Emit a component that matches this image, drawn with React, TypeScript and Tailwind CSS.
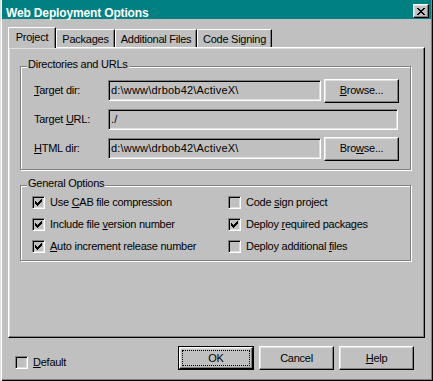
import type { ReactNode } from "react";

const raised =
  "border border-t-white border-l-white border-r-black border-b-black shadow-[inset_-1px_-1px_0_#808080,inset_1px_1px_0_#dfdfdf]";
const sunken =
  "border border-t-[#808080] border-l-[#808080] border-r-white border-b-white shadow-[inset_1px_1px_0_#000,inset_-1px_-1px_0_#dfdfdf]";

function Check({ on }: { on?: boolean }) {
  return (
    <span className={`w-[13px] h-[13px] shrink-0 flex items-center justify-center bg-[#c0c0c0] ${sunken}`}>
      {on && (
        <svg width="7" height="7" viewBox="0 0 7 7" shapeRendering="crispEdges">
          <path
            d="M0 2h1v3h-1z M1 3h1v3h-1z M2 4h1v3h-1z M3 3h1v3h-1z M4 2h1v3h-1z M5 1h1v3h-1z M6 0h1v3h-1z"
            fill="#000"
          />
        </svg>
      )}
    </span>
  );
}

function CheckRow({ on, children }: { on?: boolean; children: ReactNode }) {
  return (
    <div className="flex items-center gap-[5px] h-[13px]">
      <Check on={on} />
      <span className="whitespace-nowrap">{children}</span>
    </div>
  );
}

function Button({ children, def, className = "" }: { children: ReactNode; def?: boolean; className?: string }) {
  if (def) {
    return (
      <div className={`w-[76px] h-[24px] border border-black ${className}`}>
        <div className={`w-full h-full flex items-center justify-center ${raised}`}>
          <span className="w-[68px] h-[16px] border border-dotted border-black flex items-center justify-center">
            {children}
          </span>
        </div>
      </div>
    );
  }
  return (
    <div className={`w-[75px] h-[24px] flex items-center justify-center ${raised} ${className}`}>
      {children}
    </div>
  );
}

function Group({ label, className = "", children }: { label: string; className?: string; children: ReactNode }) {
  return (
    <div
      className={`relative w-[391px] border border-[#808080] shadow-[1px_1px_0_#fff,inset_1px_1px_0_#fff] ${className}`}
    >
      <span className="absolute -top-[9px] left-[6px] px-[1px] bg-[#c0c0c0] leading-[13px]">{label}</span>
      {children}
    </div>
  );
}

function Edit({ value, w }: { value: string; w: string }) {
  return (
    <div className={`${w} h-[21px] pl-[2px] flex items-center bg-[#c0c0c0] ${sunken}`}>
      <span className="whitespace-nowrap tracking-[0.2px]">{value}</span>
    </div>
  );
}

export default function App() {
  const tabs = ["Packages", "Additional Files", "Code Signing"];
  const tabW = ["w-[59px]", "w-[82px]", "w-[75px]"];

  return (
    <div className="w-[433px] h-[381px] bg-[#c0c0c0] overflow-hidden flex flex-col text-black text-[11px] leading-[13px] tracking-[-0.25px] font-[family-name:'Liberation_Sans',Arial,sans-serif] shadow-[inset_1px_0_0_#dfdfdf,inset_2px_0_0_#fff,inset_-1px_-1px_0_#000,inset_-2px_-2px_0_#808080]">
      {/* title bar */}
      <div className="mx-[2px] h-[19px] bg-[#008080] flex items-start justify-between shrink-0">
        <span className="pl-[4px] pt-[6px] text-white font-bold text-[12px] leading-[14px] tracking-[-0.15px]">
          Web Deployment Options
        </span>
        <div className={`mt-[4px] mr-[2px] w-[16px] h-[14px] bg-[#c0c0c0] flex items-center justify-center ${raised}`}>
          <svg width="8" height="7" viewBox="0 0 8 7" shapeRendering="crispEdges">
            <path
              d="M0 0h2v1h-2z M6 0h2v1h-2z M1 1h2v1h-2z M5 1h2v1h-2z M2 2h4v1h-4z M3 3h2v1h-2z M2 4h4v1h-4z M1 5h2v1h-2z M5 5h2v1h-2z M0 6h2v1h-2z M6 6h2v1h-2z"
              fill="#000"
            />
          </svg>
        </div>
      </div>

      {/* tabs */}
      <div className="ml-[8px] mt-[8px] h-[20px] flex items-end shrink-0">
        <div className="relative z-10 -mb-px w-[48px] h-[21px] bg-[#c0c0c0] border-l border-t border-r border-l-white border-t-white border-r-black shadow-[inset_-1px_0_0_#808080] flex items-start justify-center pt-[3px]">
          Project
        </div>
        {tabs.map((t, i) => (
          <div
            key={t}
            className={`${tabW[i]} h-[18px] border-l border-t border-r border-l-white border-t-white border-r-black shadow-[inset_-1px_0_0_#808080] flex items-start justify-center pt-[3px]`}
          >
            {t}
          </div>
        ))}
      </div>

      {/* panel */}
      <div className="ml-[8px] w-[417px] h-[291px] shrink-0 border border-t-white border-l-white border-r-black border-b-black shadow-[inset_-1px_-1px_0_#808080,inset_1px_1px_0_#dfdfdf] pl-[11px] pt-[18px]">
        <Group label="Directories and URLs" className="h-[104px] pt-[12px] pl-[13px] flex flex-col gap-[6px]">
          <div className="flex items-center h-[23px]">
            <span className="w-[74px]">
              <u>T</u>arget dir:
            </span>
            <Edit value="d:\www\drbob42\ActiveX\" w="w-[213px]" />
            <Button className="ml-[3px]">
              <span>
                <u>B</u>rowse...
              </span>
            </Button>
          </div>
          <div className="flex items-center h-[23px]">
            <span className="w-[74px]">
              Target <u>U</u>RL:
            </span>
            <Edit value="./" w="w-[290px]" />
          </div>
          <div className="flex items-center h-[23px]">
            <span className="w-[74px]">
              <u>H</u>TML dir:
            </span>
            <Edit value="d:\www\drbob42\ActiveX\" w="w-[213px]" />
            <Button className="ml-[3px]">
              <span>
                Bro<u>w</u>se...
              </span>
            </Button>
          </div>
        </Group>

        <Group label="General Options" className="mt-[15px] h-[76px] pt-[10px] pl-[11px]">
          <div className="grid grid-cols-[196px_1fr] gap-y-[9px]">
            <CheckRow on>
              Use <u>C</u>AB file compression
            </CheckRow>
            <CheckRow>
              Code <u>s</u>ign project
            </CheckRow>
            <CheckRow on>
              Include file <u>v</u>ersion number
            </CheckRow>
            <CheckRow on>
              Deploy <u>r</u>equired packages
            </CheckRow>
            <CheckRow on>
              <u>A</u>uto increment release number
            </CheckRow>
            <CheckRow>
              Deploy additional <u>f</u>iles
            </CheckRow>
          </div>
        </Group>
      </div>

      {/* bottom row */}
      <div className="mt-[8px] flex items-start shrink-0">
        <div className="ml-[15px] mt-[10px] w-[163px]">
          <CheckRow>
            <u>D</u>efault
          </CheckRow>
        </div>
        <Button def>OK</Button>
        <Button className="ml-[5px]">Cancel</Button>
        <Button className="ml-[5px]">
          <span>
            <u>H</u>elp
          </span>
        </Button>
      </div>
    </div>
  );
}
